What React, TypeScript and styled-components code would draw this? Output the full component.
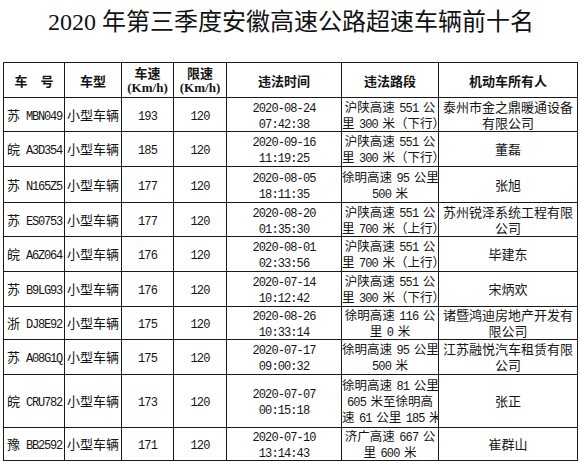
import styled, { createGlobalStyle } from "styled-components";

const GlobalStyle = createGlobalStyle`
  html, body {
    margin: 0;
    padding: 0;
    background: #ffffff;
  }
  body {
    font-family: "Noto Sans CJK SC", sans-serif;
    color: #141414;
  }
`;

const Page = styled.div`
  width: 582px;
  height: 462px;
  overflow: hidden;
  background: #ffffff;
`;

const Title = styled.h1`
  margin: 0;
  height: 62px;
  padding-top: 2px;
  box-sizing: border-box;
  line-height: 40px;
  text-align: center;
  font-family: "Liberation Serif", "Noto Sans CJK SC", serif;
  font-size: 24px;
  font-weight: 400;
  color: #111111;
`;

const Table = styled.table`
  margin-left: 3px;
  width: 575px;
  border-collapse: collapse;
  table-layout: fixed;
  font-size: 13px;
  line-height: 16px;
`;

const HeadCell = styled.th`
  border: 1px solid #1a1a1a;
  padding: 0;
  font-weight: 700;
  font-size: 13px;
  line-height: 15px;
  text-align: center;
  vertical-align: middle;
  white-space: nowrap;
`;

const Unit = styled.span`
  display: block;
  height: 15px;
  font-family: "Liberation Serif", serif;
  font-size: 13px;
`;

const Row = styled.tr<{ $h: number }>`
  height: ${({ $h }) => $h}px;
`;

const Cell = styled.td<{ $align?: "left" | "center" }>`
  border: 1px solid #1a1a1a;
  padding: ${({ $align }) => ($align === "left" ? "0 0 0 3px" : "0")};
  text-align: ${({ $align }) => $align ?? "center"};
  vertical-align: middle;
  overflow: hidden;
  white-space: nowrap;
`;

const Line = styled.div`
  height: 16px;
  white-space: nowrap;
`;

const Latin = styled.span<{ $tight?: boolean }>`
  font-family: "Liberation Mono", monospace;
  font-size: 12px;
  letter-spacing: ${({ $tight }) => ($tight ? "-1.2px" : "-0.9px")};
`;

const RoadCell = styled(Cell)`
  font-size: 12.5px;

  ${Latin} {
    word-spacing: -1.8px;
  }
`;

function Mixed({ text, tight }: { text: string; tight?: boolean }) {
  const parts = text.split(/([\x20-\x7e]+)/).filter((p) => p !== "");
  return (
    <>
      {parts.map((p, i) =>
        /^[\x20-\x7e]+$/.test(p) ? (
          <Latin key={i} $tight={tight}>
            {p}
          </Latin>
        ) : (
          <span key={i}>{p}</span>
        )
      )}
    </>
  );
}

type Record = {
  plate: string;
  speed: string;
  date: string;
  time: string;
  road: string[];
  owner: string[];
  h: number;
};

const rows: Record[] = [
  { plate: "苏 MBN049", speed: "193", date: "2020-08-24", time: "07:42:38", road: ["沪陕高速 551 公", "里 300 米（下行）"], owner: ["泰州市金之鼎暖通设备", "有限公司"], h: 34 },
  { plate: "皖 A3D354", speed: "185", date: "2020-09-16", time: "11:19:25", road: ["沪陕高速 551 公", "里 300 米（下行）"], owner: ["董磊"], h: 35 },
  { plate: "苏 N165Z5", speed: "177", date: "2020-08-05", time: "18:11:35", road: ["徐明高速 95 公里", "500 米"], owner: ["张旭"], h: 36 },
  { plate: "苏 ES0753", speed: "177", date: "2020-08-20", time: "01:35:30", road: ["沪陕高速 551 公", "里 700 米（上行）"], owner: ["苏州锐泽系统工程有限", "公司"], h: 34 },
  { plate: "皖 A6Z064", speed: "176", date: "2020-08-01", time: "02:33:56", road: ["沪陕高速 551 公", "里 700 米（上行）"], owner: ["毕建东"], h: 35 },
  { plate: "苏 B9LG93", speed: "176", date: "2020-07-14", time: "10:12:42", road: ["沪陕高速 551 公", "里 300 米（下行）"], owner: ["宋炳欢"], h: 35 },
  { plate: "浙 DJ8E92", speed: "175", date: "2020-08-26", time: "10:33:14", road: ["徐明高速 116 公", "里 0 米"], owner: ["诸暨鸿迪房地产开发有", "限公司"], h: 32 },
  { plate: "苏 A08G1Q", speed: "175", date: "2020-07-17", time: "09:00:32", road: ["徐明高速 95 公里", "500 米"], owner: ["江苏融悦汽车租赁有限", "公司"], h: 35 },
  { plate: "皖 CRU782", speed: "173", date: "2020-07-07", time: "00:15:18", road: ["徐明高速 81 公里", "605 米至徐明高", "速 61 公里 185 米"], owner: ["张正"], h: 53 },
  { plate: "豫 BB2592", speed: "171", date: "2020-07-10", time: "13:14:43", road: ["济广高速 667 公", "里 600 米"], owner: ["崔群山"], h: 32 },
];

const widths = [61, 57, 52, 53, 115, 97, 139];

export default function App() {
  return (
    <Page>
      <GlobalStyle />
      <Title>2020 年第三季度安徽高速公路超速车辆前十名</Title>
      <Table>
        <colgroup>
          {widths.map((w, i) => (
            <col key={i} style={{ width: w }} />
          ))}
        </colgroup>
        <thead>
          <Row $h={35}>
            <HeadCell>车　号</HeadCell>
            <HeadCell>车型</HeadCell>
            <HeadCell>
              车速<Unit>(Km/h)</Unit>
            </HeadCell>
            <HeadCell>
              限速<Unit>(Km/h)</Unit>
            </HeadCell>
            <HeadCell>违法时间</HeadCell>
            <HeadCell>违法路段</HeadCell>
            <HeadCell>机动车所有人</HeadCell>
          </Row>
        </thead>
        <tbody>
          {rows.map((r) => (
            <Row key={r.plate} $h={r.h}>
              <Cell $align="left">
                <Line>
                  <Mixed text={r.plate} tight />
                </Line>
              </Cell>
              <Cell>
                <Line>小型车辆</Line>
              </Cell>
              <Cell>
                <Line>
                  <Mixed text={r.speed} />
                </Line>
              </Cell>
              <Cell>
                <Line>
                  <Mixed text="120" />
                </Line>
              </Cell>
              <Cell>
                <Line>
                  <Mixed text={r.date} />
                </Line>
                <Line>
                  <Mixed text={r.time} />
                </Line>
              </Cell>
              <RoadCell>
                {r.road.map((l) => (
                  <Line key={l}>
                    <Mixed text={l} />
                  </Line>
                ))}
              </RoadCell>
              <Cell>
                {r.owner.map((l) => (
                  <Line key={l}>{l}</Line>
                ))}
              </Cell>
            </Row>
          ))}
        </tbody>
      </Table>
    </Page>
  );
}
